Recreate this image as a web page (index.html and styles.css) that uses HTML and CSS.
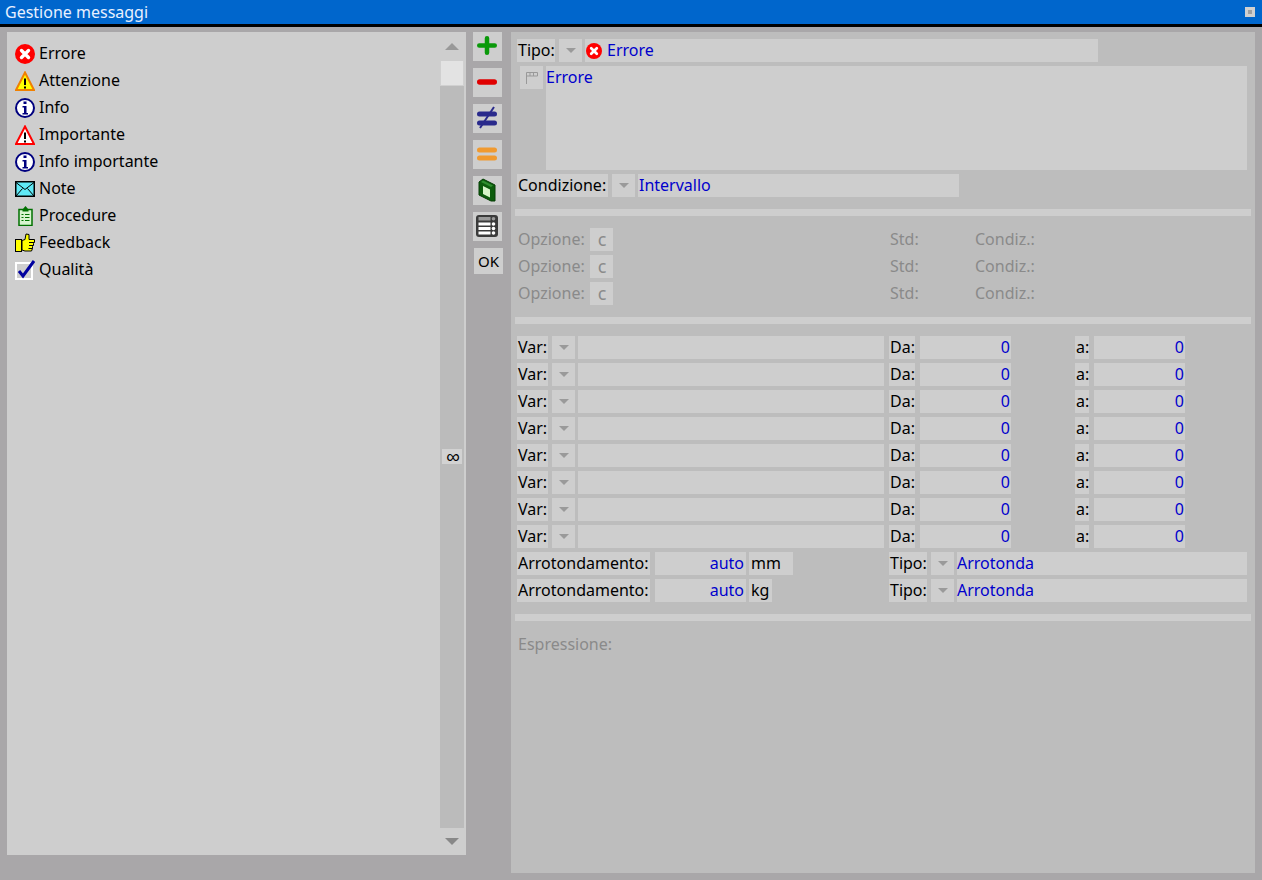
FILE: index.html
```html
<!DOCTYPE html>
<html lang="it">
<head>
  <meta charset="UTF-8">
  <title>Gestione messaggi</title>
  <link rel="stylesheet" href="styles.css">
</head>
<body>
  <svg class="defs">
    <symbol id="ico-errore" viewBox="0 0 20 20">
      <circle cx="10" cy="10" r="10" fill="#f00"/>
      <path d="M6.5 6.5l7 7M13.5 6.5l-7 7" stroke="#fff" stroke-width="3.4" stroke-linecap="round"/>
    </symbol>
    <symbol id="ico-info" viewBox="0 0 20 20">
      <circle cx="10" cy="10" r="9" fill="#fff" stroke="#00007f" stroke-width="2"/>
      <path d="M8.5 3.5h3v2.500h-3zM7.500 8h4v7h1.500v1.500H7.500V15H9V9.500H7.500z" fill="#00007f"/>
    </symbol>
  </svg>

  <header class="titlebar">
    <span class="titlebar-text">Gestione messaggi</span>
    <span class="titlebar-btn"></span>
  </header>

  <div class="main">
    <!-- Lista tipi -->
    <div class="lista">
      <ul class="voci">
        <li><svg class="ico"><use href="#ico-errore"/></svg>Errore</li>
        <li>
          <svg class="ico" viewBox="0 0 20 20"><path d="M10 1.500L19 19H1z" fill="#ff0" stroke="#f08000" stroke-width="2"/><path d="M9 7.500h2V14H9zM9 15.500h2v2H9z" fill="#000"/></svg>Attenzione
        </li>
        <li><svg class="ico"><use href="#ico-info"/></svg>Info</li>
        <li>
          <svg class="ico" viewBox="0 0 20 20"><path d="M10 1.500L19 19H1z" fill="#fff" stroke="#f00" stroke-width="2"/><path d="M9 7.500h2V14H9zM9 15.500h2v2H9z" fill="#000"/></svg>Importante
        </li>
        <li><svg class="ico"><use href="#ico-info"/></svg>Info importante</li>
        <li>
          <svg class="ico" viewBox="0 0 20 20"><rect x="0.750" y="2.750" width="18.500" height="14.500" fill="#5fe9f5" stroke="#000" stroke-width="1.500"/><path d="M1 3.500l9 7 9-7M1 17l6.500-7.500M19 17l-6.500-7.500" fill="none" stroke="#000"/></svg>Note
        </li>
        <li>
          <svg class="ico" viewBox="0 0 20 20"><rect x="4" y="3.500" width="13" height="16" fill="#d8f5d0" stroke="#007000" stroke-width="1.500"/><path d="M7.500 3.500L10.500 0l3 3.500v2h-6z" fill="#007000"/><path d="M6.500 8.500h2M10 8.500h4.500M6.500 11.500h2M10 11.500h4.500M6.500 14.500h2M10 14.500h4.500" stroke="#007000" stroke-width="1.200"/></svg>Procedure
        </li>
        <li>
          <svg class="ico" viewBox="0 0 20 20"><rect x="0.500" y="6.500" width="6" height="12" fill="#ff0" stroke="#000"/><path d="M7 7.500l3-1 1-5.500 3 .5v5h5.500v3l-1 1v2l-1 1v2l-1 2.500H10l-3-1z" fill="#ff0" stroke="#000"/><path d="M14 9.500h5M14 12.500h4M13.500 15.500h4" stroke="#000"/></svg>Feedback
        </li>
        <li>
          <svg class="ico" viewBox="0 0 20 20"><rect x="0" y="2" width="18" height="18" fill="#fff"/><rect x="2" y="4" width="14" height="14" fill="#cfcfcf"/><path d="M4 11l4 5L19 1" fill="none" stroke="#00009f" stroke-width="3"/></svg>Qualità
        </li>
      </ul>
      <div class="scroll">
        <span class="freccia freccia-su"></span>
        <div class="scroll-track">
          <div class="scroll-thumb"></div>
          <span class="scroll-inf">∞</span>
        </div>
        <span class="freccia freccia-giu"></span>
      </div>
    </div>

    <!-- Barra comandi -->
    <div class="comandi">
      <button class="cmd"><svg viewBox="0 0 29 29"><path d="M6.250 13.500h15.500M14 6.250v14.500" stroke="#0a990a" stroke-width="4.500" stroke-linecap="round"/></svg></button>
      <button class="cmd"><svg viewBox="0 0 29 29"><path d="M6.750 14h14.500" stroke="#e00000" stroke-width="5.500" stroke-linecap="round"/></svg></button>
      <button class="cmd"><svg viewBox="0 0 29 29"><path d="M6.500 10h15M6.500 19h15" stroke="#2a2a8c" stroke-width="5" stroke-linecap="round"/><path d="M21 3L7 24" stroke="#2a2a8c" stroke-width="2"/></svg></button>
      <button class="cmd"><svg viewBox="0 0 29 29"><path d="M6.500 10h15M6.500 18h15" stroke="#f09a30" stroke-width="5" stroke-linecap="round"/></svg></button>
      <button class="cmd"><svg viewBox="0 0 29 29"><path d="M6 6l4-3 12 6v16h-4L6 19z" fill="#0c5c0c" stroke="#063f06"/><path d="M10 4.500l10 5-2 1.500-10-5z" fill="#2f8f2f"/><path d="M10 10l7 3.500v8l-7-3.500z" fill="#d6f5c8"/></svg></button>
      <button class="cmd"><svg viewBox="0 0 29 29"><rect x="3" y="3" width="22" height="22" rx="3" fill="#3a3a3a"/><rect x="5.500" y="5" width="12" height="3.500" fill="#9a9a9a"/><path d="M5.500 10.500h12v3h-12zM5.500 15h12v3h-12zM5.500 19.500h12v3h-12z" fill="#fff"/><circle cx="20.500" cy="6.800" r="1.800" fill="#9a9a9a"/><circle cx="20.500" cy="12" r="1.800" fill="#fff"/><circle cx="20.500" cy="16.500" r="1.800" fill="#fff"/><circle cx="20.500" cy="21" r="1.800" fill="#fff"/></svg></button>
      <button class="cmd cmd-ok">OK</button>
    </div>

    <!-- Dettaglio messaggio -->
    <form class="dettaglio">
      <div class="gruppo">
        <div class="riga">
          <span class="cella w-tipo">Tipo:</span>
          <span class="cella tendina"></span>
          <span class="cella valore w-tipo-val"><svg class="ico-mini"><use href="#ico-errore"/></svg>Errore</span>
        </div>
        <div class="riga-testo">
          <span class="cella bandiera">
            <svg viewBox="0 0 12 12" width="12" height="12"><path d="M0.500 12V0.500h11v3.500H0.500M4 0.500V4M7.500 0.500V4" fill="none" stroke="#999"/></svg>
          </span>
          <div class="cella valore testo">Errore</div>
        </div>
        <div class="riga">
          <span class="cella w-cond">Condizione:</span>
          <span class="cella tendina"></span>
          <span class="cella valore w-cond-val">Intervallo</span>
        </div>
      </div>

      <hr class="sep">

      <div class="gruppo">
        <div class="riga spenta">
          <span class="w-opz">Opzione:</span><span class="cella box-c">c</span><span class="w-std">Std:</span><span>Condiz.:</span>
        </div>
        <div class="riga spenta">
          <span class="w-opz">Opzione:</span><span class="cella box-c">c</span><span class="w-std">Std:</span><span>Condiz.:</span>
        </div>
        <div class="riga spenta">
          <span class="w-opz">Opzione:</span><span class="cella box-c">c</span><span class="w-std">Std:</span><span>Condiz.:</span>
        </div>
      </div>

      <hr class="sep">

      <div class="gruppo">
        <div class="riga"><span class="cella w-var">Var:</span><span class="cella tendina"></span><span class="cella w-var-val"></span><span class="cella w-da">Da:</span><span class="cella num w-num">0</span><span class="cella w-a">a:</span><span class="cella num w-num">0</span></div>
        <div class="riga"><span class="cella w-var">Var:</span><span class="cella tendina"></span><span class="cella w-var-val"></span><span class="cella w-da">Da:</span><span class="cella num w-num">0</span><span class="cella w-a">a:</span><span class="cella num w-num">0</span></div>
        <div class="riga"><span class="cella w-var">Var:</span><span class="cella tendina"></span><span class="cella w-var-val"></span><span class="cella w-da">Da:</span><span class="cella num w-num">0</span><span class="cella w-a">a:</span><span class="cella num w-num">0</span></div>
        <div class="riga"><span class="cella w-var">Var:</span><span class="cella tendina"></span><span class="cella w-var-val"></span><span class="cella w-da">Da:</span><span class="cella num w-num">0</span><span class="cella w-a">a:</span><span class="cella num w-num">0</span></div>
        <div class="riga"><span class="cella w-var">Var:</span><span class="cella tendina"></span><span class="cella w-var-val"></span><span class="cella w-da">Da:</span><span class="cella num w-num">0</span><span class="cella w-a">a:</span><span class="cella num w-num">0</span></div>
        <div class="riga"><span class="cella w-var">Var:</span><span class="cella tendina"></span><span class="cella w-var-val"></span><span class="cella w-da">Da:</span><span class="cella num w-num">0</span><span class="cella w-a">a:</span><span class="cella num w-num">0</span></div>
        <div class="riga"><span class="cella w-var">Var:</span><span class="cella tendina"></span><span class="cella w-var-val"></span><span class="cella w-da">Da:</span><span class="cella num w-num">0</span><span class="cella w-a">a:</span><span class="cella num w-num">0</span></div>
        <div class="riga"><span class="cella w-var">Var:</span><span class="cella tendina"></span><span class="cella w-var-val"></span><span class="cella w-da">Da:</span><span class="cella num w-num">0</span><span class="cella w-a">a:</span><span class="cella num w-num">0</span></div>
        <div class="riga">
          <span class="cella w-arr">Arrotondamento:</span><span class="cella num w-num w-auto">auto</span><span class="cella w-mm">mm</span>
          <span class="cella w-tipo2">Tipo:</span><span class="cella tendina"></span><span class="cella valore w-arr-val">Arrotonda</span>
        </div>
        <div class="riga">
          <span class="cella w-arr">Arrotondamento:</span><span class="cella num w-num w-auto">auto</span><span class="cella w-kg">kg</span>
          <span class="cella w-tipo2 dopo-kg">Tipo:</span><span class="cella tendina"></span><span class="cella valore w-arr-val">Arrotonda</span>
        </div>
      </div>

      <hr class="sep">

      <div class="riga spenta"><span>Espressione:</span></div>
    </form>
  </div>
</body>
</html>
```

FILE: styles.css
```css
body {
  margin: 0;
  background-color: #a9a7a9;
  font-family: 'Noto Sans', sans-serif;
  font-size: 16px;
  color: #000;
  height: 880px;
  overflow: hidden;
}

.defs {
  display: none;
}

/* Barra del titolo */
.titlebar {
  display: flex;
  justify-content: space-between;
  align-items: center;
  height: 24px;
  padding: 0 7px 0 5px;
  background-color: #0066cc;
  border-bottom: 3px solid #000;
}

.titlebar-text {
  color: #e8f0ff;
}

.titlebar-btn {
  width: 10px;
  height: 10px;
  background-color: #d0d0d0;
  position: relative;
}

.titlebar-btn::after {
  content: "";
  position: absolute;
  left: 3px;
  top: 3px;
  width: 4px;
  height: 4px;
  background-color: #a0a0a0;
}

.main {
  display: flex;
  align-items: flex-start;
  padding: 5px 7px 0;
}

/* Lista */
.lista {
  display: flex;
  flex: none;
  width: 459px;
  height: 823px;
  background-color: #cecece;
}

.voci {
  list-style: none;
  flex: 1;
  margin: 8px 0 0;
  padding: 0 0 0 8px;
}

.voci li {
  display: flex;
  align-items: center;
  box-sizing: border-box;
  height: 27px;
  padding-bottom: 2px;
}

.ico {
  width: 20px;
  height: 20px;
  margin: 2px 4px 0 0;
}

.scroll {
  display: flex;
  flex-direction: column;
  align-items: center;
  width: 24px;
  margin-right: 2px;
}

.freccia {
  width: 0;
  height: 0;
  border-left: 7px solid transparent;
  border-right: 7px solid transparent;
}

.freccia-su {
  margin: 11px 0;
  border-bottom: 7px solid #999;
}

.freccia-giu {
  margin-top: 10px;
  border-top: 7px solid #888;
}

.scroll-track {
  position: relative;
  display: flex;
  flex-direction: column;
  align-items: center;
  width: 24px;
  height: 767px;
  background-color: #bbb;
}

.scroll-thumb {
  width: 22px;
  height: 24px;
  background-color: #e3e3e3;
  border: 1px solid #d0d0d0;
  border-width: 0 1px 1px;
}

.scroll-inf {
  position: absolute;
  top: 388px;
  left: 2px;
  box-sizing: border-box;
  width: 20px;
  height: 15px;
  padding-left: 2px;
  line-height: 15px;
  font-size: 19px;
  text-align: center;
  background-color: #d2d2d2;
}

/* Barra comandi */
.comandi {
  display: flex;
  flex: none;
  flex-direction: column;
  gap: 7px;
  width: 30px;
  margin-left: 7px;
}

.cmd {
  width: 29px;
  height: 29px;
  padding: 0;
  border: none;
  background-color: #cecece;
  font: inherit;
}

.cmd svg {
  display: block;
  width: 29px;
  height: 29px;
}

.cmd-ok {
  height: 26px;
  margin-left: 1px;
  font-size: 15px;
}

/* Dettaglio */
.dettaglio {
  display: flex;
  flex: none;
  flex-direction: column;
  gap: 12px;
  box-sizing: border-box;
  width: 744px;
  height: 841px;
  margin-left: 8px;
  padding: 7px 4px 0 6px;
  background-color: #bdbdbd;
}

.gruppo {
  display: flex;
  flex-direction: column;
  gap: 4px;
}

.riga {
  display: flex;
  align-items: center;
  height: 23px;
}

.riga-testo {
  display: flex;
  padding-left: 3px;
}

.cella {
  display: block;
  box-sizing: border-box;
  height: 23px;
  line-height: 23px;
  padding-left: 1px;
  background-color: #cecece;
  white-space: nowrap;
}

.valore {
  color: #0000cc;
}

.num {
  color: #0000cc;
  text-align: right;
  padding-right: 1px;
}

.spenta {
  color: #8a8a8a;
  padding-left: 1px;
}

.spenta span:not(.box-c) {
  margin-bottom: 2px;
}

.tendina {
  position: relative;
  width: 23px;
  margin-left: 4px;
}

.tendina::after {
  content: "";
  position: absolute;
  left: 7px;
  top: 9px;
  border-left: 5px solid transparent;
  border-right: 5px solid transparent;
  border-top: 5px solid #9a9a9a;
}

.ico-mini {
  width: 16px;
  height: 16px;
  vertical-align: -3px;
  margin-right: 5px;
}

.w-tipo { width: 38px; }
.w-tipo-val { width: 513px; margin-left: 3px; }

.bandiera {
  display: flex;
  justify-content: center;
  align-items: center;
  width: 23px;
  padding: 0;
}

.testo {
  width: 701px;
  height: 104px;
  margin-left: 3px;
  padding-left: 0;
}

.w-cond { width: 91px; }
.w-cond-val { width: 321px; margin-left: 3px; }

.sep {
  align-self: flex-start;
  width: 736px;
  height: 7px;
  margin: 0 0 0 -2px;
  border: none;
  background-color: #cecece;
}

.w-opz { width: 72px; }

.box-c {
  width: 23px;
  padding: 0 0 0 1px;
  font-size: 18px;
  text-align: center;
}

.w-std { width: 85px; margin-left: 277px; }

.w-var { width: 31px; }
.w-var-val { width: 306px; margin-left: 3px; }
.w-da { width: 26px; margin-left: 5px; }
.w-num { width: 91px; margin-left: 5px; }
.w-a { width: 14px; margin-left: 64px; }

.w-arr { width: 133px; }
.w-auto { margin-left: 5px; padding-right: 2px; }
.w-mm { width: 44px; margin-left: 3px; padding-left: 2px; }
.w-kg { width: 23px; margin-left: 3px; padding-left: 2px; }
.w-tipo2 { width: 38px; margin-left: 96px; }
.dopo-kg { margin-left: 117px; }
.w-arr-val { width: 290px; margin-left: 3px; padding-left: 0; }
```
